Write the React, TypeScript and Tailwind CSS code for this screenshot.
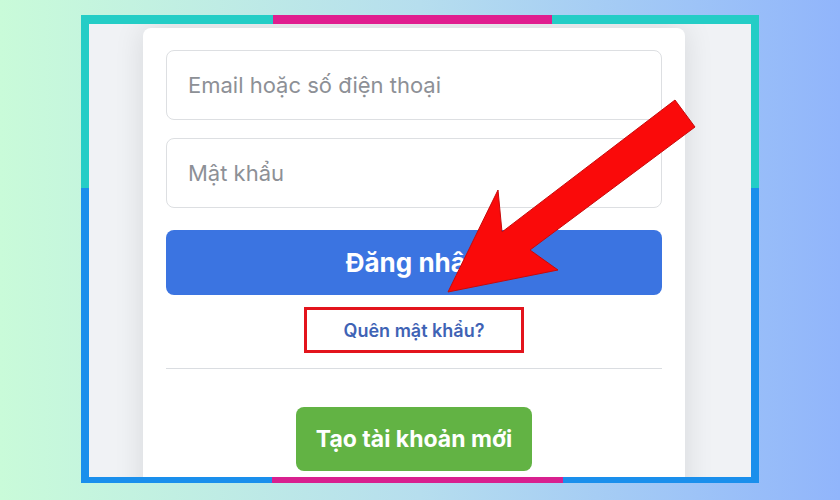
import React from 'react';

export default function App() {
    return (
        <div
            className="relative w-[840px] h-[500px] overflow-hidden bg-gradient-to-r from-[#c9fbd9] via-[#b6deee] to-[#91b5fb] pt-[15px] pl-[81px]"
            style={{ fontFamily: 'Inter, "Noto Sans", sans-serif' }}
        >
            {/* Framed screenshot */}
            <div className="flex flex-col w-[678px] h-[468px]">
                {/* top border */}
                <div className="flex h-[9px] shrink-0">
                    <div className="w-[192px] bg-[#24cdc6]" />
                    <div className="w-[279px] bg-[#e01e8f]" />
                    <div className="flex-1 bg-[#24cdc6]" />
                </div>

                <div className="flex flex-1 min-h-0">
                    {/* left border */}
                    <div className="flex flex-col w-[8px] shrink-0">
                        <div className="h-[164px] bg-[#24cdc6]" />
                        <div className="flex-1 bg-[#1a8fec]" />
                    </div>

                    {/* page content */}
                    <div className="flex-1 bg-[#f0f2f5] overflow-hidden pt-[4px] pl-[54px] pr-[66px]">
                        <div className="bg-white rounded-t-lg h-[480px] px-[23px] pt-[22px] shadow-[0_0_30px_rgba(0,0,0,0.11)]">
                            <div className="flex flex-col gap-[18px]">
                                <input
                                    placeholder="Email hoặc số điện thoại"
                                    className="h-[70px] w-full rounded-lg border border-[#dddfe2] px-[21px] text-[22px] text-[#1c1e21] placeholder:text-[#8d9096] outline-none"
                                />
                                <input
                                    placeholder="Mật khẩu"
                                    className="h-[70px] w-full rounded-lg border border-[#dddfe2] px-[21px] text-[22px] text-[#1c1e21] placeholder:text-[#8d9096] outline-none"
                                />
                            </div>

                            <button className="mt-[22px] h-[65px] w-full rounded-lg bg-[#3b74e1] text-white text-[26px] font-bold">
                                Đăng nhập
                            </button>

                            <div className="flex justify-center mt-[12px]">
                                <a className="flex items-center justify-center w-[220px] h-[46px] border-[3px] border-[#e3141c] text-[18px] font-semibold text-[#3f63b5]">
                                    Quên mật khẩu?
                                </a>
                            </div>

                            <div className="mt-[15px] h-px bg-[#dadde1]" />

                            <div className="flex justify-center mt-[38px]">
                                <button className="w-[236px] h-[64px] rounded-lg bg-[#62b344] text-white text-[23px] font-bold">
                                    Tạo tài khoản mới
                                </button>
                            </div>
                        </div>
                    </div>

                    {/* right border */}
                    <div className="flex flex-col w-[8px] shrink-0">
                        <div className="h-[164px] bg-[#24cdc6]" />
                        <div className="flex-1 bg-[#1a8fec]" />
                    </div>
                </div>

                {/* bottom border */}
                <div className="flex h-[6px] shrink-0">
                    <div className="w-[191px] bg-[#1a8fec]" />
                    <div className="w-[291px] bg-[#d8208f]" />
                    <div className="flex-1 bg-[#1a8fec]" />
                </div>
            </div>

            {/* red annotation arrow */}
            <svg className="absolute inset-0 pointer-events-none" width="840" height="500" viewBox="0 0 840 500">
                <polygon
                    points="675,100 695,127 530,250 558,270 448,292 498,190 502,232"
                    fill="#fa0a0a"
                    stroke="#c80a0a"
                    strokeWidth="1"
                    strokeLinejoin="miter"
                />
            </svg>
        </div>
    );
}
